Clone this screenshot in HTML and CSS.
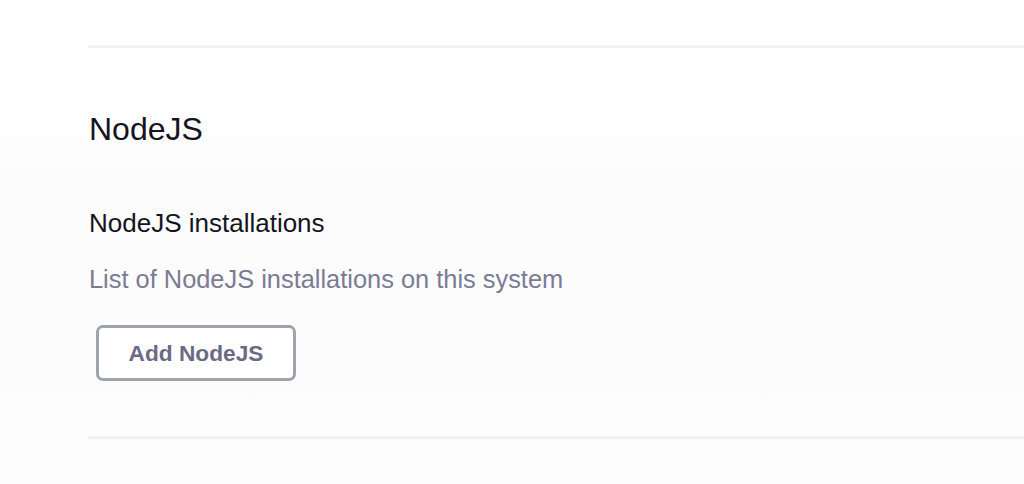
FILE: index.html
```html
<!DOCTYPE html>
<html lang="en">
<head>
<meta charset="utf-8">
<title>NodeJS</title>
<link rel="stylesheet" href="styles.css">
</head>
<body>
  <div class="page">
    <div class="rule rule-top"></div>
    <section class="section">
      <h2 class="section-title">NodeJS</h2>
      <div class="field">
        <div class="field-label">NodeJS installations</div>
        <div class="field-desc">List of NodeJS installations on this system</div>
        <div class="field-actions">
          <button class="btn" type="button">Add NodeJS</button>
        </div>
      </div>
    </section>
    <div class="rule rule-bottom"></div>
  </div>
</body>
</html>
```

FILE: styles.css
```css
html, body {
  margin: 0;
  padding: 0;
  background: #ffffff;
}

body {
  font-family: "Liberation Sans", Arial, sans-serif;
  color: #14141f;
  height: 484px;
  overflow: hidden;
}

.page {
  padding-top: 45px;
  background: linear-gradient(to bottom, #ffffff 0px, #ffffff 48px, #fcfcfd 200px, #fdfdfe 484px);
  height: 439px;
}

.rule {
  height: 3px;
  margin-left: 88px;
  background: #f0f0f5;
}

.section {
  padding: 61px 0 55px 89px;
}

.section-title {
  margin: 0;
  font-size: 32px;
  line-height: 40px;
  font-weight: 400;
  color: #14141f;
}

.field {
  margin-top: 58px;
}

.field-label {
  font-size: 26px;
  line-height: 32px;
  color: #14141f;
}

.field-desc {
  margin-top: 24px;
  font-size: 25.4px;
  line-height: 32px;
  color: #7b7b95;
}

.field-actions {
  margin-top: 30px;
  padding-left: 7px;
}

.btn {
  box-sizing: border-box;
  width: 200px;
  height: 56px;
  border: 3px solid #9ea4ac;
  border-radius: 7px;
  background: #ffffff;
  color: #6b6a85;
  font-family: "Liberation Sans", Arial, sans-serif;
  font-weight: 700;
  font-size: 22.7px;
  padding: 0;
  cursor: pointer;
}
```
